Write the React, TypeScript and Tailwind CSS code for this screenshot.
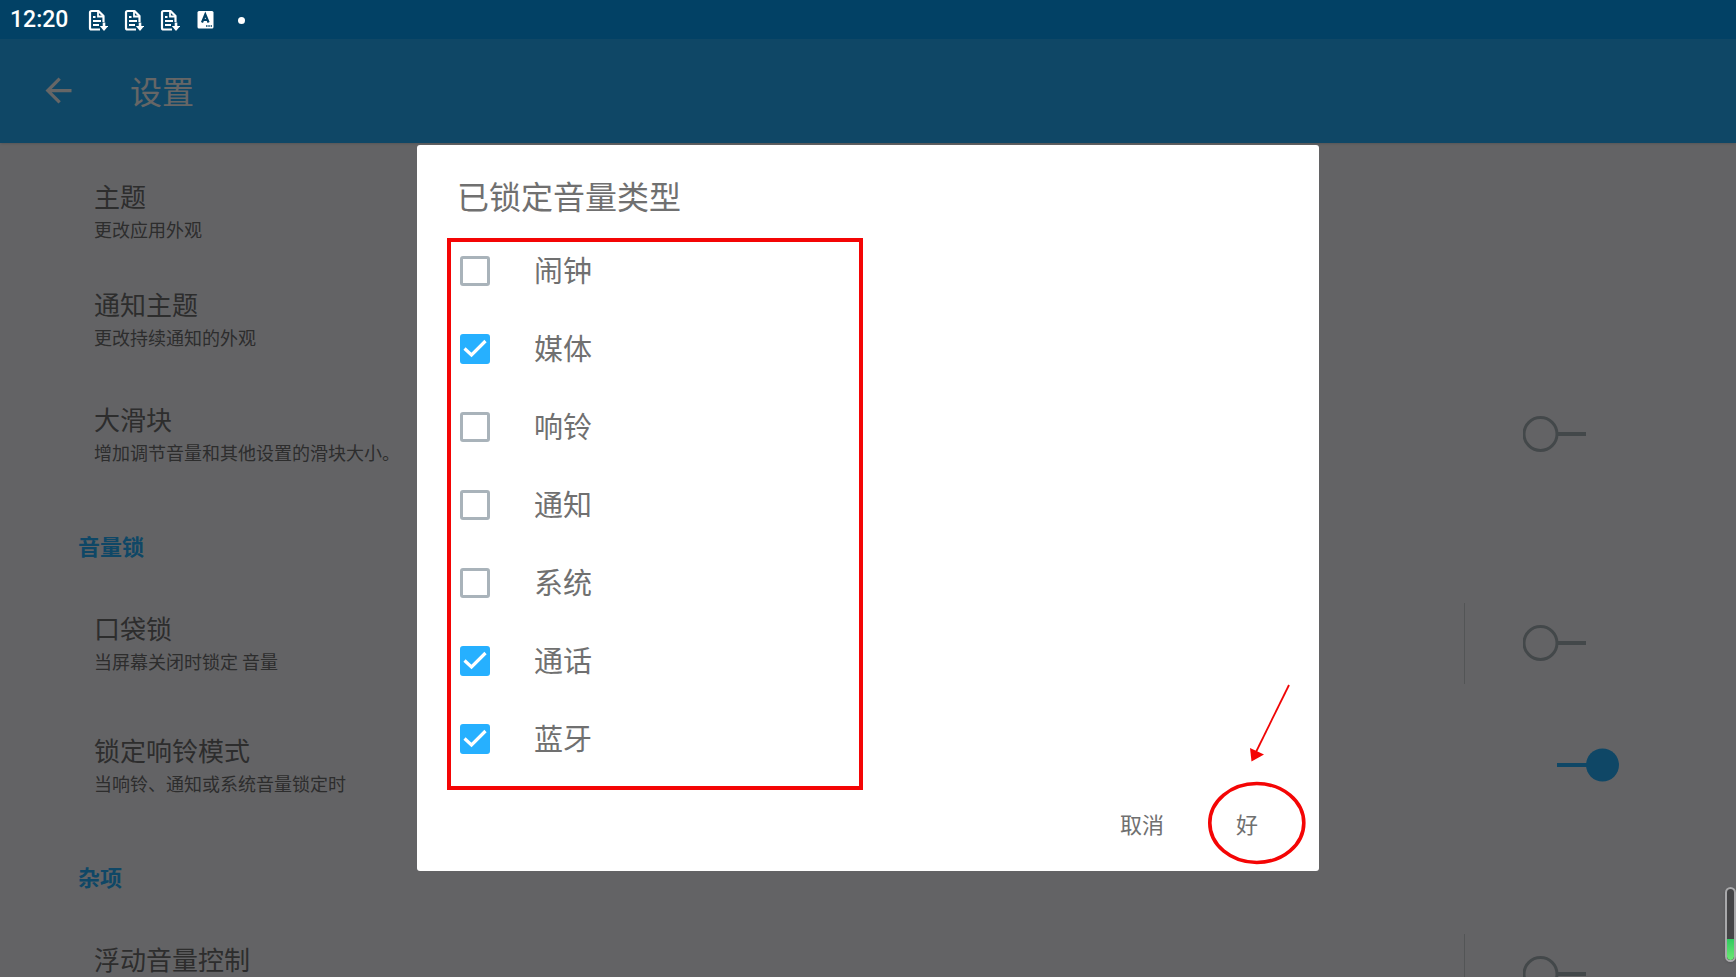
import { useState } from "react";
import { MdArrowBack } from "react-icons/md";

type Pref = {
  id: string;
  title: string;
  summary?: string;
  hasSwitch?: boolean;
  divider?: boolean;
  on?: boolean;
};

const generalPrefs: Pref[] = [
  { id: "theme", title: "主题", summary: "更改应用外观" },
  { id: "notification-theme", title: "通知主题", summary: "更改持续通知的外观" },
  { id: "big-sliders", title: "大滑块", summary: "增加调节音量和其他设置的滑块大小。", hasSwitch: true },
];

const lockPrefs: Pref[] = [
  { id: "pocket-lock", title: "口袋锁", summary: "当屏幕关闭时锁定 音量", hasSwitch: true, divider: true },
  { id: "ringer-lock", title: "锁定响铃模式", summary: "当响铃、通知或系统音量锁定时", hasSwitch: true, on: true },
];

const miscPrefs: Pref[] = [{ id: "floating", title: "浮动音量控制", hasSwitch: true, divider: true }];

const volumeTypes = [
  { id: "alarm", label: "闹钟", checked: false },
  { id: "media", label: "媒体", checked: true },
  { id: "ring", label: "响铃", checked: false },
  { id: "notification", label: "通知", checked: false },
  { id: "system", label: "系统", checked: false },
  { id: "call", label: "通话", checked: true },
  { id: "bluetooth", label: "蓝牙", checked: true },
];

function FileDownIcon() {
  return (
    <svg width="20" height="22" viewBox="0 0 20 22" fill="none" stroke="white" strokeWidth="2.2" aria-hidden="true">
      <path d="M12 20.500H3.500A1.500 1.500 0 0 1 2 19V3.500A1.500 1.500 0 0 1 3.500 2H10.500l5 5v6" strokeLinejoin="round" />
      <path d="M10 2.500V7.500H15" strokeWidth="1.800" />
      <path d="M5 8h2.500M5 12h8M5 16h6" strokeWidth="2" />
      <path d="M16 13.500v5" strokeWidth="2.600" />
      <path d="M11.800 17h8.400L16 22z" fill="white" stroke="none" />
    </svg>
  );
}

function KeyboardIcon() {
  return (
    <svg width="20" height="22" viewBox="0 0 20 22" aria-hidden="true">
      <rect x="1.500" y="2" width="16" height="17.500" rx="1.500" fill="white" />
      <path d="M6 13.500L9.300 5.500L12.600 13.500M7.200 11h4.300" fill="none" stroke="#024165" strokeWidth="2.200" />
      <path d="M10 17h6" stroke="#024165" strokeWidth="1.500" strokeDasharray="1.500 .8" />
    </svg>
  );
}

function StatusBar() {
  return (
    <div className="flex h-[39px] shrink-0 items-center gap-4 bg-[#024165] pt-px pl-[10px] text-white">
      <span className="mr-1 font-['Roboto'] text-[23px] leading-6 font-medium">12:20</span>
      <FileDownIcon />
      <FileDownIcon />
      <FileDownIcon />
      <KeyboardIcon />
      <span className="flex w-[18px] justify-center">
        <span className="size-[7px] rounded-full bg-white" />
      </span>
    </div>
  );
}

function Switch({ id, defaultOn }: { id: string; defaultOn?: boolean }) {
  const [on, setOn] = useState(!!defaultOn);

  return (
    <span className="relative block h-10 w-24">
      <input
        id={id}
        type="checkbox"
        role="switch"
        checked={on}
        onChange={() => setOn(!on)}
        className="absolute inset-0 size-full cursor-pointer appearance-none"
      />
      <svg viewBox="0 0 96 40" className="pointer-events-none size-full" aria-hidden="true">
        {on ? (
          <>
            <path d="M34 20h34" stroke="#26b2ff" strokeWidth="4" />
            <circle cx="79.500" cy="20" r="16.500" fill="#26b2ff" />
          </>
        ) : (
          <>
            <path d="M35 20h28" stroke="#a9b3b9" strokeWidth="4" />
            <circle cx="17.500" cy="20" r="16.500" fill="none" stroke="#a9b3b9" strokeWidth="3" />
          </>
        )}
      </svg>
    </span>
  );
}

function PrefRow({ pref }: { pref: Pref }) {
  return (
    <li className={`flex items-center ${pref.hasSwitch ? "h-[122px]" : "h-[108px]"}`}>
      <div className="flex-1 pl-[94px] text-[#707072]">
        <label htmlFor={pref.id} className="block text-[26px] leading-9">
          {pref.title}
        </label>
        <p className="h-[30px] text-[18px] leading-[30px]">{pref.summary}</p>
      </div>
      {pref.divider && <div className="h-[81px] w-px bg-[#cfd4d6]" />}
      {pref.hasSwitch ? (
        <div className="flex w-[271px] pl-[58px]">
          <Switch id={pref.id} defaultOn={pref.on} />
        </div>
      ) : (
        <button id={pref.id} aria-label={pref.title} className="h-10 w-[271px]" />
      )}
    </li>
  );
}

function Section({ title, prefs }: { title?: string; prefs: Pref[] }) {
  return (
    <section>
      {title && (
        <h2 className="h-[87px] pt-[34px] pl-[78px] text-[22px] leading-8 font-bold text-[#26b2ff]">{title}</h2>
      )}
      <ul>
        {prefs.map((pref) => (
          <PrefRow key={pref.id} pref={pref} />
        ))}
      </ul>
    </section>
  );
}

function VolumeTypeDialog() {
  const [types, setTypes] = useState(volumeTypes);

  const toggle = (id: string) => {
    setTypes(types.map((t) => (t.id === id ? { ...t, checked: !t.checked } : t)));
  };

  return (
    <div
      role="dialog"
      aria-labelledby="dialog-title"
      className="w-full max-w-[902px] rounded-[3px] bg-white pt-[26px] pb-[22px] text-[#707070]"
    >
      <h2 id="dialog-title" className="px-10 text-[32px] leading-[48px]">
        已锁定音量类型
      </h2>

      {/* Highlighted list */}
      <ul className="mt-[19px] ml-[30px] flex w-[416px] flex-col gap-[30px] border-4 border-[#f40505] pt-[5px] pb-[23px] pl-[9px]">
        {types.map((t) => (
          <li key={t.id}>
            <label className="flex h-12 cursor-pointer items-center gap-11 text-[29px] leading-[44px]">
              <span className="relative block size-[30px]">
                <input
                  type="checkbox"
                  checked={t.checked}
                  onChange={() => toggle(t.id)}
                  className="block size-[30px] appearance-none rounded-[3px] border-3 border-[#a9b3ba] checked:border-[#26b0ff] checked:bg-[#26b0ff]"
                />
                {t.checked && (
                  <svg viewBox="0 0 30 30" className="pointer-events-none absolute inset-0" aria-hidden="true">
                    <path d="M4.500 14.500l7 6.500L25.500 7" fill="none" stroke="white" strokeWidth="3.200" />
                  </svg>
                )}
              </span>
              <span className="pb-1">{t.label}</span>
            </label>
          </li>
        ))}
      </ul>

      <div className="mt-[11px] flex justify-end gap-[17px] pr-7 text-[22px]">
        <button className="h-12 w-[88px] pb-[3px]">取消</button>
        <button className="relative h-12 w-[88px] pb-[3px]">
          好
          {/* Arrow and ring pointing at the confirm button */}
          <svg
            width="100"
            height="184"
            viewBox="0 0 100 184"
            className="pointer-events-none absolute -right-4 -bottom-4"
            aria-hidden="true"
          >
            <path d="M82 4L49 71" stroke="#f00505" strokeWidth="1.800" />
            <path d="M43 67l14 6.500L44.500 80.500z" fill="#f40505" />
            <ellipse cx="49.800" cy="142" rx="47" ry="39.500" fill="none" stroke="#f40505" strokeWidth="3.600" />
          </svg>
        </button>
      </div>
    </div>
  );
}

export default function App() {
  return (
    <div className="flex h-screen flex-col overflow-hidden font-['Noto_Sans_CJK_SC',sans-serif]">
      <StatusBar />
      <div className="relative min-h-0 flex-1 bg-[#f8f8fc]">
        <div className="h-full overflow-hidden">
          <header className="flex h-[104px] items-center gap-[52px] bg-[#26b2ff] pb-[2px] pl-[39px] text-white shadow-sm">
            <a href="#" aria-label="返回">
              <MdArrowBack size={39} />
            </a>
            <h1 className="text-[32px] leading-[48px]">设置</h1>
          </header>
          <main className="pt-[14px]">
            <Section prefs={generalPrefs} />
            <Section title="音量锁" prefs={lockPrefs} />
            <Section title="杂项" prefs={miscPrefs} />
          </main>
        </div>

        {/* Backdrop */}
        <div className="absolute inset-0 flex items-center justify-center bg-black/60">
          <VolumeTypeDialog />
        </div>

        {/* Battery edge indicator */}
        <div className="absolute right-0 bottom-[15px] flex h-[75px] w-[11px] items-end overflow-hidden rounded-full border-2 border-[#a9a9ab] bg-[#444446] shadow">
          <div className="h-[21px] w-full rounded-b-full bg-linear-to-b from-[#2ecb60] to-[#6be873]" />
        </div>
      </div>
    </div>
  );
}
